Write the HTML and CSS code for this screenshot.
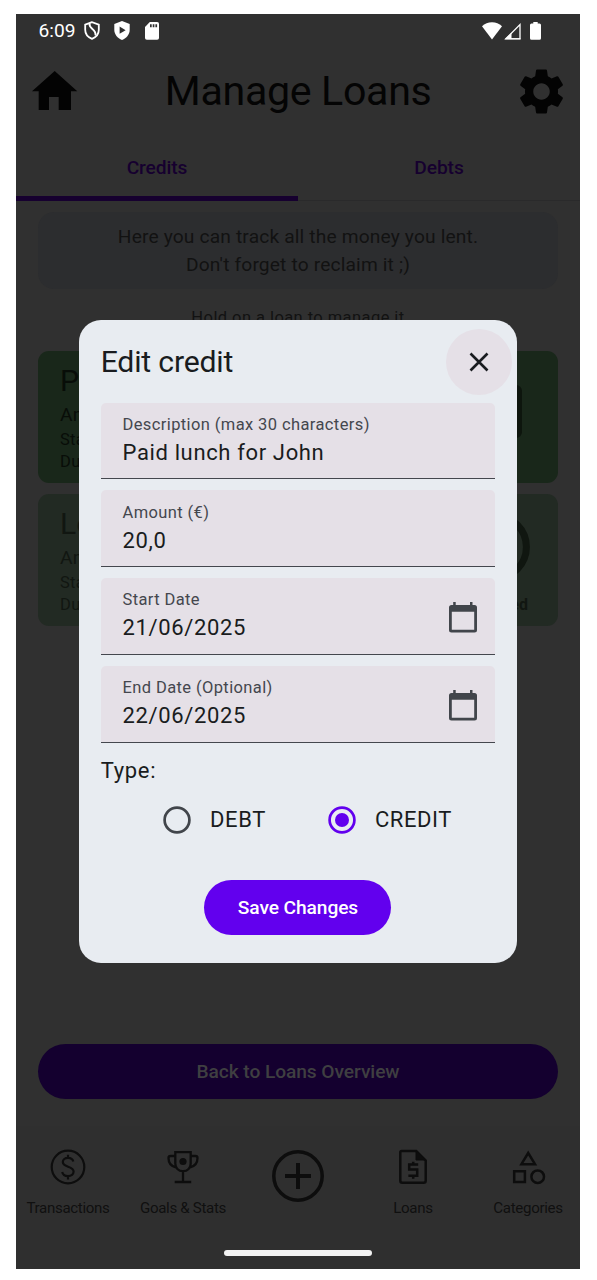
FILE: index.html
```html
<!DOCTYPE html>
<html lang="en">
<head>
<meta charset="utf-8">
<title>Manage Loans</title>
<link rel="stylesheet" href="styles.css">
</head>
<body>
<div class="phone">
  <header class="status">
    <span class="time">6:09</span>
    <svg class="s-shield" width="16" height="19" viewBox="0 0 16 19"><path d="M8 1.2L1.200 3.700v5.100c0 4 2.700 7.400 6.800 9 4.100-1.600 6.800-5 6.800-9V3.700z" fill="none" stroke="#fff" stroke-width="1.800"/><path d="M5.500 2.200C4.500 8.500 12.500 7.500 11.500 14.500" fill="none" stroke="#fff" stroke-width="1.900"/></svg>
    <svg class="s-play" width="16" height="19" viewBox="0 0 16 19"><path d="M8 0L.3 3v5.800c0 4.500 3.200 8.600 7.700 10.200 4.500-1.600 7.700-5.700 7.700-10.200V3z" fill="#fff"/><path d="M5.600 5.600v7.200l6-3.600z" fill="#303030"/></svg>
    <svg class="s-sd" width="14" height="18" viewBox="0 0 14 18"><path d="M4.800 0h7.400q1.800 0 1.800 1.800v14.100q0 1.800-1.800 1.800H1.800Q0 17.700 0 15.900V5z" fill="#fff"/><path d="M5 2.200h1.700v3H5zm2.700 0h1.700v3H7.700zm2.700 0h1.700v3h-1.700z" fill="#303030"/></svg>
    <svg class="s-wifi" width="20" height="18" viewBox="0 0 20 18"><path d="M0 4.200Q4.200.2 10 .2t10 4L10 17.500z" fill="#fff"/></svg>
    <svg class="s-signal" width="17" height="18" viewBox="0 0 17 18"><path d="M1.800 16.800L16 2.500v14.300z" fill="none" stroke="#fff" stroke-width="1.300"/><path d="M1 17.300L7.500 10.500v5.800h9v1z" fill="#fff"/></svg>
    <svg class="s-battery" width="11" height="18" viewBox="0 0 11 18"><path d="M3.300 0h4.400v1.600h1.800Q11 1.600 11 3.100v13.100q0 1.500-1.500 1.500h-8Q0 17.700 0 16.200V3.100q0-1.500 1.500-1.500h1.800z" fill="#fff"/></svg>
  </header>

  <div class="topbar">
    <svg class="home" width="46" height="40" viewBox="0 0 46 40"><path d="M6.700 39V20.200H0L22.700 0l22.600 20.200H39V39H26.700V26H17v13z" fill="#030303"/></svg>
    <h1>Manage Loans</h1>
    <svg width="55" height="55" viewBox="0 0 24 24"><path fill="#030303" d="M19.140 12.940c.040-.3.060-.610.060-.940 0-.320-.020-.640-.070-.940l2.030-1.580a.49.49 0 0 0 .12-.610l-1.920-3.320a.488.488 0 0 0-.590-.220l-2.390.960c-.5-.380-1.030-.7-1.620-.940l-.360-2.540a.484.484 0 0 0-.480-.410h-3.840c-.240 0-.430.170-.470.410l-.360 2.540c-.590.240-1.130.570-1.620.940l-2.390-.960c-.220-.080-.470 0-.590.220L2.740 8.870c-.120.210-.080.470.120.610l2.030 1.580c-.050.300-.090.630-.090.940s.020.640.070.940l-2.030 1.580a.49.49 0 0 0-.120.610l1.920 3.320c.120.220.370.290.590.220l2.390-.960c.5.380 1.030.7 1.620.940l.360 2.540c.050.240.240.410.480.410h3.840c.240 0 .440-.170.470-.410l.360-2.540c.590-.240 1.130-.560 1.620-.940l2.390.960c.220.080.470 0 .590-.220l1.920-3.320c.120-.220.070-.470-.120-.610l-2.010-1.580zM12 15.600c-1.980 0-3.600-1.620-3.600-3.600s1.620-3.600 3.600-3.600 3.600 1.620 3.600 3.600-1.620 3.600-3.600 3.600z"/></svg>
  </div>

  <nav class="tabs">
    <div class="tab active">Credits</div>
    <div class="tab">Debts</div>
  </nav>

  <main class="content">
    <p class="info">Here you can track all the money you lent.<br>Don't forget to reclaim it ;)</p>
    <p class="hint">Hold on a loan to manage it</p>
    <article class="loan">
      <div>
        <h2>P</h2>
        <p class="amount">Am</p>
        <p>Start</p>
        <p>Due</p>
      </div>
      <svg class="box" width="56" height="53" viewBox="0 0 56 53"><rect x="3" y="3" width="50" height="47" rx="3" fill="none" stroke="#0d150d" stroke-width="6"/></svg>
    </article>
    <article class="loan done">
      <div>
        <h2>Lo</h2>
        <p class="amount">Am</p>
        <p>Start</p>
        <p>Due</p>
      </div>
      <div class="state">
        <svg width="70" height="70" viewBox="0 0 70 70"><circle cx="35" cy="35" r="31.400" fill="none" stroke="#101610" stroke-width="7"/></svg>
        <span>Returned</span>
      </div>
    </article>
    <button class="back">Back to Loans Overview</button>
  </main>

  <footer class="bottom">
    <div class="items">
      <div class="item">
        <svg width="36" height="36" viewBox="0 0 36 36" fill="none" stroke="#0d0d0d" stroke-width="2.200"><circle cx="18" cy="18" r="16.300"/><path d="M23.300 12.600C22.700 10.200 20.700 8.900 18 8.900c-3 0-5.200 1.700-5.200 4.200 0 5.700 10.800 3.500 10.800 9.500 0 2.700-2.400 4.500-5.600 4.500-3 0-5.200-1.500-5.800-4.100M18 5.700v3.200m0 18v3.500"/></svg>
        <span>Transactions</span>
      </div>
      <div class="item">
        <svg width="36" height="36" viewBox="0 0 36 36" fill="none" stroke="#0d0d0d" stroke-width="2.300"><path d="M10.300 3.200h15.400v11.300c0 4.300-3 7.700-7.700 7.700s-7.700-3.400-7.700-7.700zM10.300 7H5.500q-2 0-2 2c0 5 2.500 8.200 7.300 9.300M25.700 7h4.800q2 0 2 2c0 5-2.500 8.200-7.300 9.300M18 22v10.500M9.700 33h16.500"/><circle cx="18" cy="12.500" r="3.600" fill="#0d0d0d" stroke="none"/></svg>
        <span>Goals &amp; Stats</span>
      </div>
      <div class="item add">
        <svg width="52" height="52" viewBox="0 0 52 52" fill="none" stroke="#0d0d0d"><circle cx="26" cy="26" r="24.200" stroke-width="3.500"/><path d="M26 13v26M13 26h26" stroke-width="4"/></svg>
      </div>
      <div class="item">
        <svg width="36" height="36" viewBox="0 0 36 36" fill="none" stroke="#0d0d0d" stroke-width="2.500"><path d="M6.700 2h14.500L30.700 11.500v20.300q0 2-2 2H7.300q-2 0-2-2V3.500Q5.300 2 6.700 2z"/><path d="M21 2v9h10z" fill="#0d0d0d" stroke-width="1"/><path d="M23.200 15.500h-9v5h8v6.300h-8.800M18.200 12.800v3m0 11v3" stroke-width="2.500"/></svg>
        <span>Loans</span>
      </div>
      <div class="item">
        <svg width="36" height="36" viewBox="0 0 36 36" fill="none" stroke="#0d0d0d" stroke-width="2.500"><path d="M18.200 4l-6.800 11.200H25z"/><path d="M4.200 22.200h10.700v10.700H4.200z"/><circle cx="27.700" cy="27.700" r="6.300"/></svg>
        <span>Categories</span>
      </div>
    </div>
    <div class="handle"></div>
  </footer>

  <section class="dialog">
    <div class="dialog-head">
      <h2>Edit credit</h2>
      <button class="close"><svg width="20" height="20" viewBox="0 0 20 20"><path d="M1.500 1.500l17 17m0-17l-17 17" stroke="#191c20" stroke-width="2.600"/></svg></button>
    </div>
    <div class="fields">
      <div class="field"><div><label>Description (max 30 characters)</label><p>Paid lunch for John</p></div></div>
      <div class="field"><div><label>Amount (€)</label><p>20,0</p></div></div>
      <div class="field"><div><label>Start Date</label><p>21/06/2025</p></div>
        <svg width="28" height="31" viewBox="0 0 28 31"><path d="M2.500 3H25.500Q28 3 28 5.500V28Q28 30.500 25.500 30.500H2.500Q0 30.500 0 28V5.500Q0 3 2.500 3zM2.800 9.700v18h22.400v-18z" fill="#41454b" fill-rule="evenodd"/><path d="M4.200 0h2.500v4H4.200zM21 0h2.500v4H21z" fill="#41454b"/></svg></div>
      <div class="field"><div><label>End Date (Optional)</label><p>22/06/2025</p></div>
        <svg width="28" height="31" viewBox="0 0 28 31"><path d="M2.500 3H25.500Q28 3 28 5.500V28Q28 30.500 25.500 30.500H2.500Q0 30.500 0 28V5.500Q0 3 2.500 3zM2.800 9.700v18h22.400v-18z" fill="#41454b" fill-rule="evenodd"/><path d="M4.200 0h2.500v4H4.200zM21 0h2.500v4H21z" fill="#41454b"/></svg></div>
    </div>
    <p class="type">Type:</p>
    <div class="radios">
      <div class="radio"><svg width="28" height="28" viewBox="0 0 28 28"><circle cx="14" cy="14" r="12.400" fill="none" stroke="#41454b" stroke-width="2.700"/></svg><span>DEBT</span></div>
      <div class="radio"><svg width="28" height="28" viewBox="0 0 28 28"><circle cx="14" cy="14" r="12.400" fill="none" stroke="#6200ee" stroke-width="2.700"/><circle cx="14" cy="14" r="7" fill="#6200ee"/></svg><span>CREDIT</span></div>
    </div>
    <button class="save">Save Changes</button>
  </section>
</div>
</body>
</html>
```
FILE: styles.css
```css
* { box-sizing: border-box; }
body { margin: 0; background: #fff; font-family: Roboto, "Liberation Sans", sans-serif; }
h1, h2, p { margin: 0; font-weight: 400; }
button { border: 0; padding: 0; font: inherit; }
svg { display: block; flex: none; }

.phone {
  position: relative;
  width: 564px; height: 1255px; margin: 14px 0 0 16px;
  display: flex; flex-direction: column;
  background: #303030; color: #121212;
  overflow: hidden;
}

.status { display: flex; height: 33px; align-items: center; padding-left: 22.500px; color: #fff; }
.time { width: 45px; font-size: 19.200px; }
.s-play { margin-left: 14px; }
.s-sd { margin-left: 15.500px; }
.s-wifi { margin-left: 322.500px; }
.s-signal { margin-left: 2.500px; }
.s-battery { margin-left: 8.500px; }

.topbar { display: flex; height: 88px; align-items: center; justify-content: space-between; padding: 0 11px 0 16.300px; color: #040404; }
.topbar h1 { font-size: 41.200px; line-height: 50px; padding-left: 4px; letter-spacing: -.35px; }

.tabs { display: flex; height: 66px; border-bottom: 1px solid #2a2a2b; flex: none; margin-bottom: 11px; }
.tab {
  flex: 1; height: 66px; padding-top: 19px;
  text-align: center; line-height: 27px;
  font-size: 19.200px; font-weight: 500; letter-spacing: -.1px; color: #16002f;
}
.tab.active { border-bottom: 5px solid #16002f; }

.content { display: flex; flex-direction: column; padding: 0 22px; }
.info {
  height: 77px; padding-top: 11px; border-radius: 16px; background: #2c2d2f;
  text-align: center; font-size: 19.200px; line-height: 27.500px; letter-spacing: .15px;
}
.hint { margin-top: 18px; height: 44px; text-align: center; font-size: 16.500px; line-height: 22px; letter-spacing: .43px; }
.loan {
  display: flex; justify-content: space-between; height: 132px; margin-bottom: 11px;
  padding: 11px 28px 0 22px; border-radius: 11px; background: #19271a; color: #080d08;
}
.loan h2 { font-size: 30.200px; line-height: 38px; }
.loan p { font-size: 16.500px; line-height: 22px; letter-spacing: .3px; }
.loan .amount { font-size: 19.200px; line-height: 28px; padding-top: .6px; }
.loan .box { margin: 23px 8px 0 0; }
.loan.done { background: #222a23; color: #111611; }
.state { display: flex; flex-direction: column; align-items: flex-end; padding-top: 7px; font-size: 16px; font-weight: 700; line-height: 22px; gap: 11.600px; }
.state span { padding-right: 2px; }
.back {
  height: 55px; margin-top: 407px; border-radius: 28px; background: #14002f; color: #3f3f41;
  font-size: 19.200px; font-weight: 500; letter-spacing: -.08px;
}

.bottom { margin-top: 27px; flex: 1; background: #2f2f2f; display: flex; flex-direction: column; align-items: center; }
.items { display: grid; grid-template-columns: repeat(5, 1fr); gap: 11px; width: 100%; height: 124px; padding-top: 22.500px; }
.item { display: flex; flex-direction: column; align-items: center; gap: 12px; font-size: 15.100px; line-height: 22px; letter-spacing: -.33px; color: #101010; white-space: nowrap; }
.item.add { padding-top: 1px; }
.handle { width: 148px; height: 6px; border-radius: 3px; background: #f2f2f2; }

.dialog {
  position: absolute; left: 63px; top: 306px; width: 438px; height: 642.500px;
  padding: 8.500px 5px 0 21.700px; border-radius: 22px; background: #e8ecf1; color: #191c20;
  display: flex; flex-direction: column;
}
.dialog-head { display: flex; align-items: center; justify-content: space-between; height: 66px; }
.dialog-head h2 { font-size: 30.200px; letter-spacing: -.2px; }
.close { width: 66px; height: 66px; border-radius: 50%; background: #e5e0e7; display: flex; align-items: center; justify-content: center; }
.fields { display: flex; flex-direction: column; gap: 11px; margin: 8px 17px 0 0; }
.field {
  height: 76.800px; padding: 11.300px 18px 0 21.800px; border-bottom: 1.400px solid #44474e;
  border-radius: 5px 5px 0 0; background: #e5e0e7; display: flex; justify-content: space-between;
}
.field label { display: block; font-size: 16.500px; line-height: 22px; letter-spacing: .39px; color: #44474e; }
.field p { font-size: 22px; line-height: 34px; letter-spacing: .64px; }
.field svg { margin-top: 12.600px; }
.type { margin-top: 11.500px; font-size: 22px; line-height: 34px; letter-spacing: .69px; }
.radios { display: flex; gap: 62px; padding: 17.500px 0 0 62.300px; font-size: 22px; line-height: 28px; letter-spacing: .6px; }
.radio { display: flex; gap: 19px; }
.radio span { padding-top: .6px; height: 28px; }
.save {
  width: 187px; height: 55px; margin: 46.200px 0 0 103.800px; border-radius: 28px; background: #6200ee; color: #fff;
  font-size: 19.200px; font-weight: 500; letter-spacing: -.1px;
}
```
